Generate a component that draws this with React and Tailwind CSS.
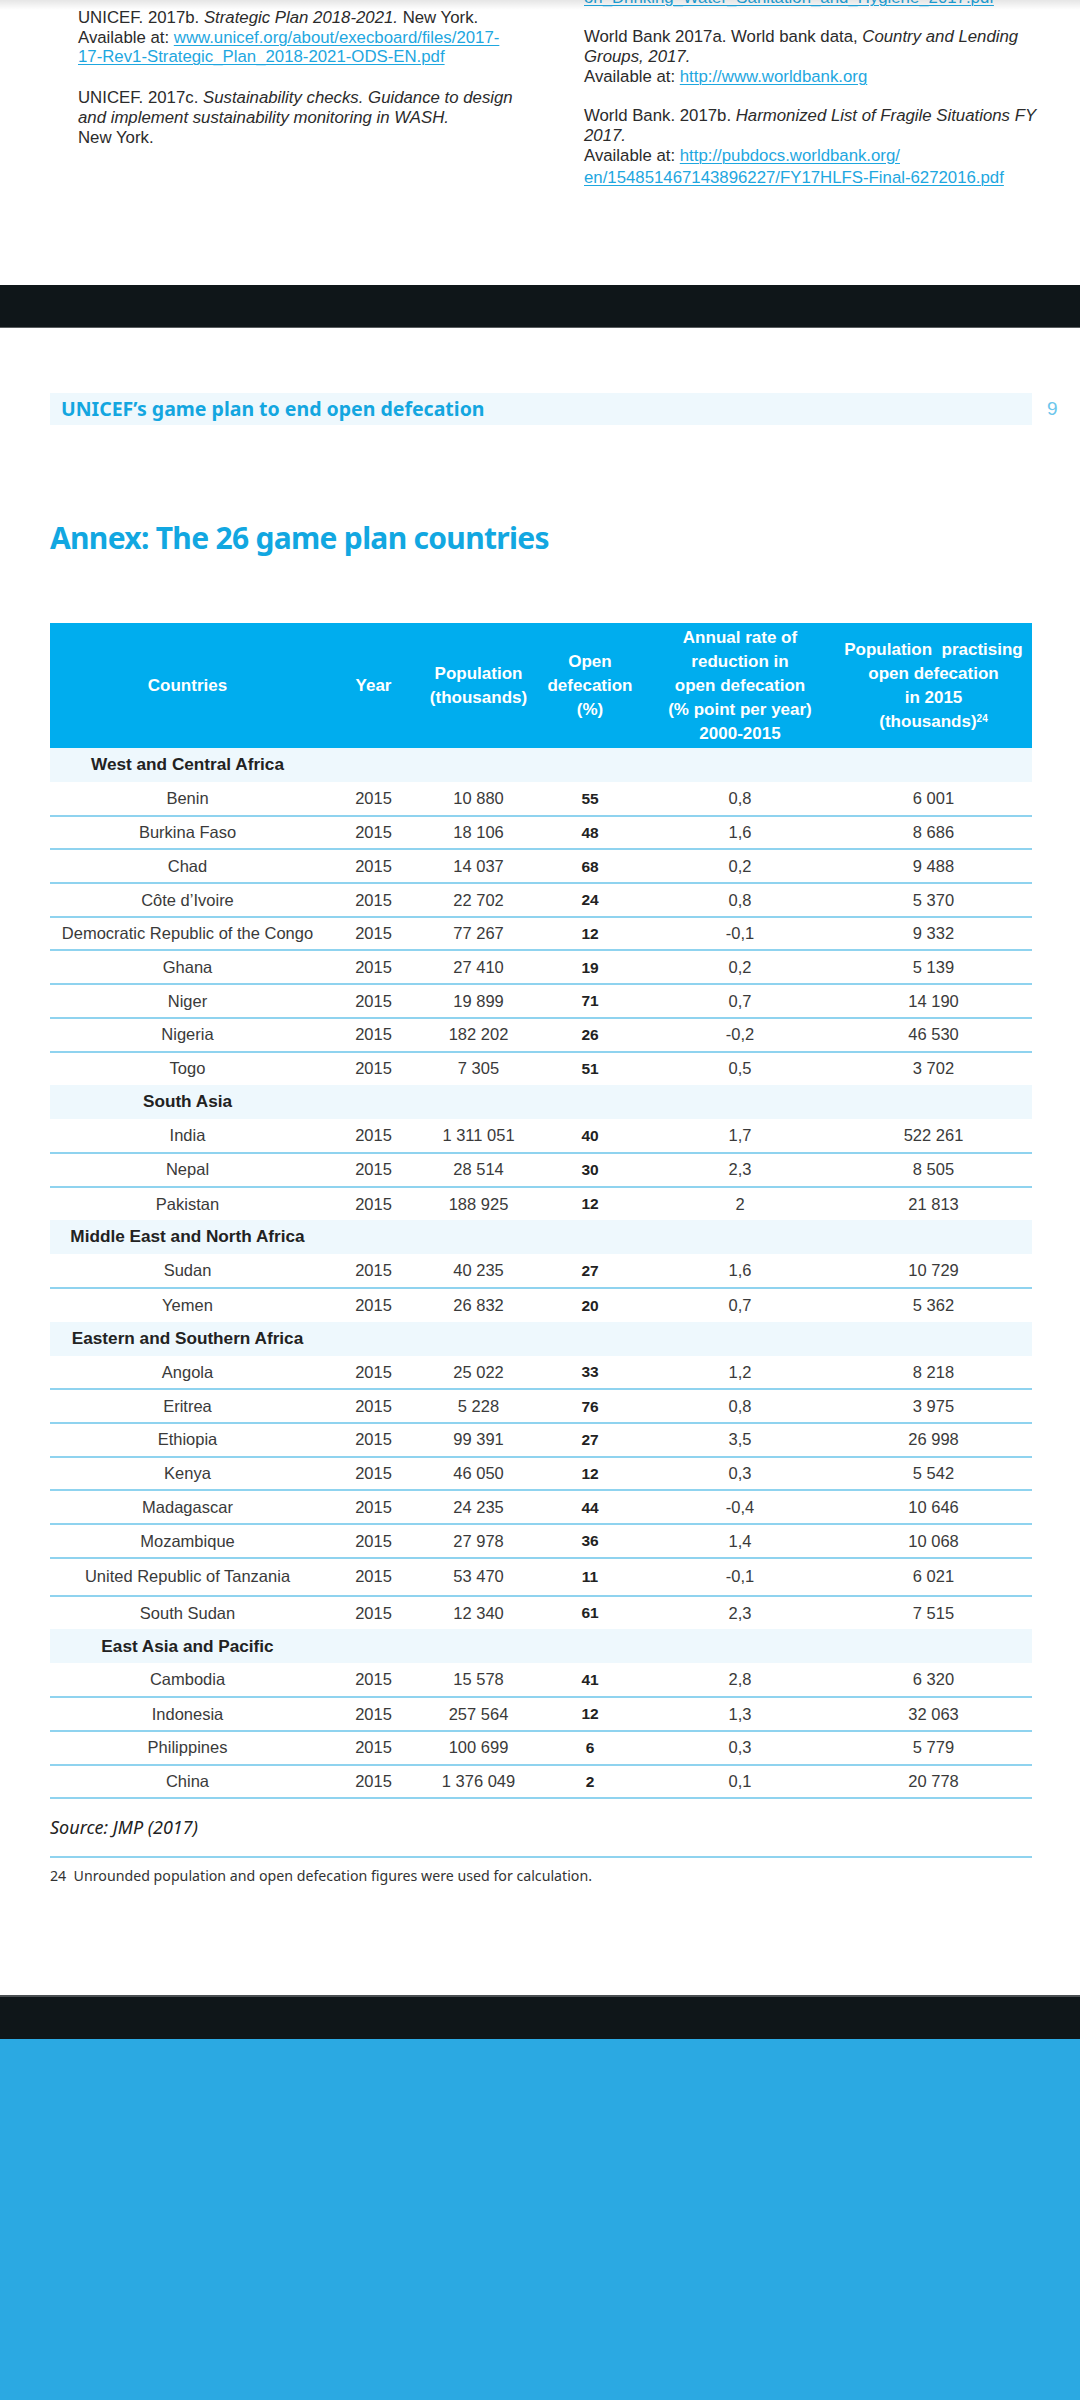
import React from 'react';

const sections = [
  {
    region: 'West and Central Africa',
    rows: [
      ['Benin', '10 880', '55', '0,8', '6 001'],
      ['Burkina Faso', '18 106', '48', '1,6', '8 686'],
      ['Chad', '14 037', '68', '0,2', '9 488'],
      ['Côte d’Ivoire', '22 702', '24', '0,8', '5 370'],
      ['Democratic Republic of the Congo', '77 267', '12', '-0,1', '9 332'],
      ['Ghana', '27 410', '19', '0,2', '5 139'],
      ['Niger', '19 899', '71', '0,7', '14 190'],
      ['Nigeria', '182 202', '26', '-0,2', '46 530'],
      ['Togo', '7 305', '51', '0,5', '3 702'],
    ],
  },
  {
    region: 'South Asia',
    rows: [
      ['India', '1 311 051', '40', '1,7', '522 261'],
      ['Nepal', '28 514', '30', '2,3', '8 505'],
      ['Pakistan', '188 925', '12', '2', '21 813'],
    ],
  },
  {
    region: 'Middle East and North Africa',
    rows: [
      ['Sudan', '40 235', '27', '1,6', '10 729'],
      ['Yemen', '26 832', '20', '0,7', '5 362'],
    ],
  },
  {
    region: 'Eastern and Southern Africa',
    rows: [
      ['Angola', '25 022', '33', '1,2', '8 218'],
      ['Eritrea', '5 228', '76', '0,8', '3 975'],
      ['Ethiopia', '99 391', '27', '3,5', '26 998'],
      ['Kenya', '46 050', '12', '0,3', '5 542'],
      ['Madagascar', '24 235', '44', '-0,4', '10 646'],
      ['Mozambique', '27 978', '36', '1,4', '10 068'],
      ['United Republic of Tanzania', '53 470', '11', '-0,1', '6 021'],
      ['South Sudan', '12 340', '61', '2,3', '7 515'],
    ],
  },
  {
    region: 'East Asia and Pacific',
    rows: [
      ['Cambodia', '15 578', '41', '2,8', '6 320'],
      ['Indonesia', '257 564', '12', '1,3', '32 063'],
      ['Philippines', '100 699', '6', '0,3', '5 779'],
      ['China', '1 376 049', '2', '0,1', '20 778'],
    ],
  },
];

const narrow = "font-['Noto_Sans_Condensed','Noto_Sans','Liberation_Sans',sans-serif] [font-stretch:condensed]";

function Link({ children }) {
  return <span className="text-[#1ea7df] underline decoration-1 underline-offset-2">{children}</span>;
}

function References() {
  return (
    <div className="relative h-[285px] overflow-hidden bg-white text-[16.8px] leading-[19.7px] text-[#2b2b2b]">
      <div className="absolute inset-x-0 top-0 h-[10px] bg-gradient-to-b from-black/10 to-transparent" />
      <div className="flex whitespace-nowrap">
        <div className="w-[584px] shrink-0 pl-[78px] pt-[8px]">
          <p>
            UNICEF. 2017b. <i>Strategic Plan 2018-2021.</i> New York.
            <br />
            Available at: <Link>www.unicef.org/about/execboard/files/2017-</Link>
            <br />
            <Link>17-Rev1-Strategic_Plan_2018-2021-ODS-EN.pdf</Link>
          </p>
          <p className="mt-[21px]">
            UNICEF. 2017c. <i>Sustainability checks. Guidance to design</i>
            <br />
            <i>and implement sustainability monitoring in WASH.</i>
            <br />
            New York.
          </p>
        </div>
        <div className="-mt-[12px] flex-1">
          <p>
            <Link>on_Drinking_Water_Sanitation_and_Hygiene_2017.pdf</Link>
          </p>
          <p className="mt-[19.7px]">
            World Bank 2017a. World bank data, <i>Country and Lending</i>
            <br />
            <i>Groups, 2017.</i>
            <br />
            Available at: <Link>http://www.worldbank.org</Link>
          </p>
          <p className="mt-[19.7px]">
            World Bank. 2017b. <i>Harmonized List of Fragile Situations FY</i>
            <br />
            <i>2017.</i>
            <br />
            Available at: <Link>http://pubdocs.worldbank.org/</Link>
          </p>
          <p className="mt-[3px]">
            <Link>en/154851467143896227/FY17HLFS-Final-6272016.pdf</Link>
          </p>
        </div>
      </div>
    </div>
  );
}

function HeaderCell({ children }) {
  return <th className="px-0 text-center align-middle font-bold whitespace-nowrap">{children}</th>;
}

function CountryTable() {
  return (
    <table className="w-[982px] table-fixed border-collapse font-['Liberation_Sans',Arial,sans-serif]">
      <colgroup>
        <col className="w-[275px]" />
        <col className="w-[97px]" />
        <col className="w-[113px]" />
        <col className="w-[110px]" />
        <col className="w-[190px]" />
        <col className="w-[197px]" />
      </colgroup>
      <thead>
        <tr className="h-[125px] bg-[#00adee] text-[17px] leading-[24px] text-white">
          <HeaderCell>Countries</HeaderCell>
          <HeaderCell>Year</HeaderCell>
          <HeaderCell>
            Population
            <br />
            (thousands)
          </HeaderCell>
          <HeaderCell>
            Open
            <br />
            defecation
            <br />
            (%)
          </HeaderCell>
          <HeaderCell>
            Annual rate of
            <br />
            reduction in
            <br />
            open defecation
            <br />
            (% point per year)
            <br />
            2000-2015
          </HeaderCell>
          <HeaderCell>
            Population&nbsp; practising
            <br />
            open defecation
            <br />
            in 2015
            <br />
            (thousands)<sup className="text-[10px]">24</sup>
          </HeaderCell>
        </tr>
      </thead>
      <tbody className="text-[16.5px] text-[#3a3a3a]">
        {sections.map((s, si) => (
          <React.Fragment key={s.region}>
            <tr className="h-[34px] bg-[#eef8fd]">
              <td className="text-center text-[17.2px] font-bold text-[#222]">{s.region}</td>
              <td colSpan={5} />
            </tr>
            {s.rows.map((r, i) => {
              const last = i === s.rows.length - 1;
              const border = !last || si === sections.length - 1 ? 'border-b-2 border-[#8fd3ef]' : '';
              const tall = r[0] === 'United Republic of Tanzania';
              return (
                <tr key={r[0]} className={`${tall ? 'h-[38px]' : 'h-[33.7px]'} ${border}`}>
                  <td className="text-center whitespace-nowrap">{r[0]}</td>
                  <td className="text-center">2015</td>
                  <td className="text-center">{r[1]}</td>
                  <td className="text-center text-[15.5px] font-bold text-[#222]">{r[2]}</td>
                  <td className="text-center">{r[3]}</td>
                  <td className="text-center">{r[4]}</td>
                </tr>
              );
            })}
          </React.Fragment>
        ))}
      </tbody>
    </table>
  );
}

export default function App() {
  return (
    <div className="w-[1080px] bg-white font-['Liberation_Sans',Arial,sans-serif]">
      <References />

      <div className="h-[43px] border-b border-[#5a5e60] bg-[#0f1619]" />

      <div className="h-[1667px] pt-[65px] pl-[50px]">
        <div className="flex items-center">
          <div className={`flex h-[32px] w-[982px] shrink-0 items-center bg-[#eef8fd] pl-[11px] text-[19.5px] font-bold text-[#13a6e0] ${narrow}`}>
            UNICEF’s game plan to end open defecation
          </div>
          <span className="ml-[15px] text-[19px] text-[#6cc6ec]">9</span>
        </div>

        <h1 className={`mt-[95px] text-[30px] leading-[36px] font-bold tracking-[-0.7px] text-[#12a7e1] ${narrow}`}>
          Annex: The 26 game plan countries
        </h1>

        <div className="mt-[67px]">
          <CountryTable />
        </div>

        <p className={`mt-[16px] text-[18px] leading-[24px] italic text-[#222] ${narrow}`}>Source: JMP (2017)</p>
        <div className="mt-[17px] h-[2px] w-[982px] bg-[#8fd3ef]" />
        <p className={`mt-[8px] text-[14.2px] leading-[20px] text-[#333] ${narrow}`}>
          24&nbsp; Unrounded population and open defecation figures were used for calculation.
        </p>
      </div>

      <div className="h-[44px] border-t-2 border-[#4a4f52] bg-[#0f1619]" />
      <div className="h-[361px] bg-[#2ba9e2]" />
    </div>
  );
}
